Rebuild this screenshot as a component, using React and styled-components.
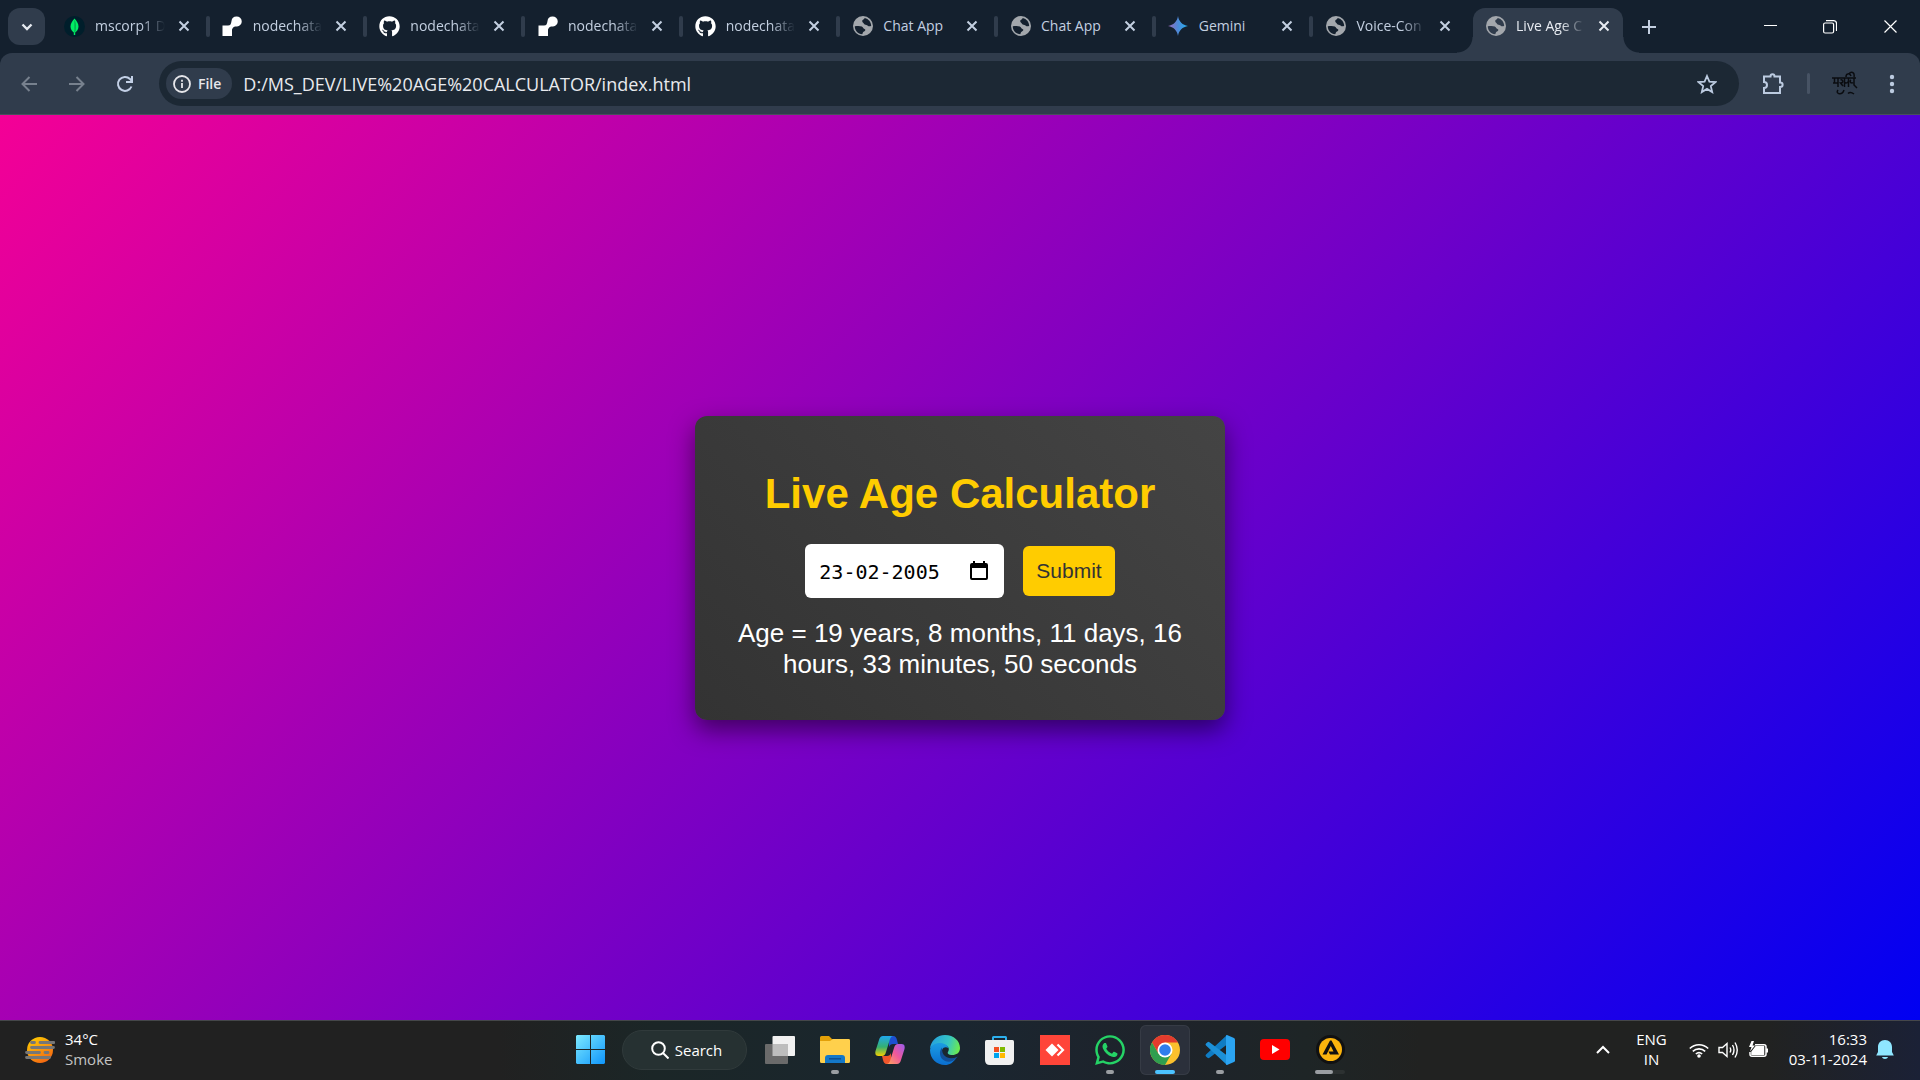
import React, { useState } from "react";
import styled, { createGlobalStyle, css } from "styled-components";
import { FaGithub, FaWhatsapp } from "react-icons/fa";

const UI = `"Open Sans", "Noto Sans", sans-serif`;

const Global = createGlobalStyle`
  * { box-sizing: border-box; }
  html, body, #root { height: 100%; margin: 0; }
  body { overflow: hidden; background: #14202e; }
  button { border: 0; padding: 0; background: none; color: inherit; font: inherit; cursor: pointer; }
  svg { display: block; flex: none; }
`;

const Screen = styled.div`
  display: flex;
  flex-direction: column;
  height: 100vh;
  font-family: ${UI};
`;

/* ---------- browser chrome ---------- */

const TabStrip = styled.header`
  display: flex;
  height: 53px;
  background: #14202e;
  color: #c3cfe0;
`;

const TabSearch = styled.button`
  display: grid;
  place-items: center;
  width: 37px;
  height: 37px;
  margin: 8px 0 0 8px;
  border-radius: 12px;
  background: #303c4c;
  color: #e6eaf0;
`;

const Tabs = styled.nav`
  display: flex;
  flex: 0 1 1578px;
  min-width: 0;
`;

const TabShell = styled.div`
  position: relative;
  display: flex;
  align-items: center;
  flex: 1 1 0;
  min-width: 0;
  margin-top: 8px;
  padding: 0 10px 9px 19px;
  gap: 10px;
  font-size: 14px;
  line-height: 20px;
  ${(p) =>
    p.$line &&
    css`
      &::after {
        content: "";
        position: absolute;
        right: -7px;
        top: 8px;
        width: 4px;
        height: 21px;
        border-radius: 2px;
        background: #303c4c;
      }
    `}
  ${(p) =>
    p.$active &&
    css`
      flex: 0 0 150px;
      margin-left: 9px;
      padding-left: 12px;
      border-radius: 12px 12px 0 0;
      background: #303c4c;
      color: #e8ecf2;
      &::before,
      &::after {
        content: "";
        position: absolute;
        bottom: 0;
        width: 16px;
        height: 16px;
      }
      &::before {
        right: 100%;
        background: radial-gradient(circle at 0 0, transparent 15px, #303c4c 16px);
      }
      &::after {
        left: 100%;
        background: radial-gradient(circle at 100% 0, transparent 15px, #303c4c 16px);
      }
    `}
`;

const Favicon = styled.span`
  display: grid;
  place-items: center;
  flex: 0 0 21px;
  height: 21px;
`;

const TabTitle = styled.span`
  flex: 1;
  min-width: 0;
  white-space: nowrap;
  mask-image: ${(p) => (p.$fade ? "linear-gradient(90deg, #000 calc(100% - 24px), transparent)" : "none")};
`;

const TabClose = styled.button`
  display: grid;
  place-items: center;
  flex: 0 0 18px;
  height: 20px;
`;

const NewTab = styled.button`
  display: grid;
  place-items: center;
  width: 52px;
  height: 53px;
`;

const WindowButtons = styled.div`
  display: flex;
  margin-left: auto;
  color: #fff;
`;

const WindowButton = styled.button`
  display: grid;
  place-items: center;
  width: 60px;
  height: 53px;
`;

const Toolbar = styled.div`
  display: flex;
  align-items: center;
  height: 62px;
  padding: 0 16px 0 11px;
  border-bottom: 1px solid #47505c;
  border-radius: 12px 12px 0 0;
  background: #303c4c;
  color: #bccbe0;
`;

const NavButton = styled.button`
  display: grid;
  place-items: center;
  width: 36px;
  height: 36px;
  margin-right: 12px;
  color: ${(p) => (p.disabled ? "#77818e" : "#c3d0e6")};
`;

const AddressBar = styled.div`
  display: flex;
  align-items: center;
  flex: 1;
  height: 45px;
  margin-left: 4px;
  padding: 0 22px 0 7px;
  gap: 11px;
  border-radius: 24px;
  background: #1c2834;
`;

const SchemeChip = styled.button`
  display: flex;
  align-items: center;
  height: 31px;
  padding: 0 11px 0 7px;
  gap: 7px;
  border-radius: 16px;
  background: #303c4c;
  color: #e6e6ea;
  font-size: 14px;
  font-weight: 600;
`;

const AddressInput = styled.input`
  flex: 1;
  min-width: 0;
  padding: 0;
  border: 0;
  outline: 0;
  background: none;
  color: #e8eaee;
  font: 18px/24px ${UI};
`;

const ToolbarTools = styled.div`
  display: flex;
  align-items: center;
  padding-left: 22px;
`;

const ToolDivider = styled.span`
  width: 3px;
  height: 21px;
  margin: 0 20px 0 22px;
  border-radius: 2px;
  background: #475364;
`;

const ProfileButton = styled.button`
  display: grid;
  place-items: center;
  width: 30px;
  height: 30px;
  margin-right: 20px;
  color: #0a0c10;
`;

/* ---------- page ---------- */

const Page = styled.main`
  display: flex;
  flex: 1;
  align-items: center;
  justify-content: center;
  min-height: 0;
  background: linear-gradient(135deg, #f40096, #0000f2);
  font-family: "Liberation Sans", Arial, sans-serif;
`;

const Card = styled.section`
  width: 530px;
  padding: 52px 36px 40px;
  border-radius: 12px;
  background: linear-gradient(45deg, #333, #444);
  box-shadow: 0 10px 25px rgba(0, 0, 0, 0.5);
  text-align: center;
`;

const Title = styled.h1`
  margin: 0 0 24px;
  color: #fc0;
  font-size: 42px;
  line-height: 52px;
`;

const Form = styled.form`
  display: flex;
  align-items: center;
  justify-content: center;
  gap: 19px;
`;

const DateField = styled.label`
  display: flex;
  align-items: center;
  width: 199px;
  height: 54px;
  padding: 0 16px 0 14px;
  border-radius: 6px;
  background: #fff;
`;

const DateInput = styled.input`
  flex: 1;
  min-width: 0;
  padding: 2px 0 0;
  border: 0;
  outline: 0;
  background: none;
  color: #000;
  font: 20px/28px "DejaVu Sans Mono", monospace;
`;

const PickerButton = styled.button`
  display: grid;
  place-items: center;
`;

const Submit = styled.button`
  height: 50px;
  padding: 0 13px;
  border-radius: 6px;
  background: #fc0;
  color: #333;
  font-size: 21px;
`;

const Result = styled.p`
  margin: 20px 0 0;
  color: #fff;
  font-size: 26px;
  line-height: 31px;
`;

/* ---------- taskbar ---------- */

const Taskbar = styled.footer`
  display: grid;
  grid-template-columns: 1fr auto 1fr;
  height: 60px;
  padding-bottom: 2px;
  border-top: 1px solid #45474a;
  background: linear-gradient(90deg, #212121 0 26%, #1b2627 34%, #1a2630 50%, #1e232b 60%, #1e2526 68%, #212221 74%, #212221 92%, #1b2136);
  color: #fff;
  font-size: 15px;
  line-height: 20px;
`;

const Weather = styled.button`
  display: flex;
  align-items: center;
  justify-self: start;
  margin-left: 25px;
  gap: 10px;
  text-align: left;
`;

const Stack = styled.span`
  display: flex;
  flex-direction: column;
  padding-bottom: 2px;
  text-align: ${(p) => p.$align || "left"};
`;

const Muted = styled.span`
  color: #c4c4c4;
`;

const Apps = styled.nav`
  display: flex;
  align-items: center;
  padding-left: 5px;
`;

const AppButton = styled.button`
  position: relative;
  display: grid;
  place-items: center;
  width: 50px;
  height: 50px;
  margin-right: 5px;
  border-radius: 6px;
  ${(p) =>
    p.$active &&
    css`
      background: #2b303b;
      box-shadow: inset 0 0 0 1px #363b45;
    `}
`;

const Mark = styled.span`
  position: absolute;
  bottom: 1px;
  left: ${(p) => (p.$grouped ? "10px" : "50%")};
  width: ${(p) => p.$w}px;
  height: 4px;
  margin-left: ${(p) => (p.$grouped ? 0 : -p.$w / 2)}px;
  border-radius: 2px;
  background: ${(p) => p.$c};
`;

const SearchPill = styled.button`
  display: flex;
  align-items: center;
  justify-content: center;
  width: 125px;
  height: 40px;
  margin: 0 8px 0 2px;
  padding-left: 4px;
  gap: 6px;
  border: 1px solid #303a3b;
  border-radius: 20px;
  background: #263132;
  font-size: 15px;
`;

const Tray = styled.div`
  display: flex;
  align-items: center;
  justify-self: end;
  padding-right: 26px;
`;

const TrayButton = styled.button`
  display: flex;
  align-items: center;
  gap: 9px;
  margin-left: ${(p) => p.$gap}px;
`;

/* ---------- drawings ---------- */

const Stroke = ({ w = 20, h, d, sw = 2, box, children }) => (
  <svg width={w} height={h || w} viewBox={box || `0 0 ${w} ${h || w}`} fill="none" stroke="currentColor" strokeWidth={sw}>
    {d && <path d={d} />}
    {children}
  </svg>
);

const Cross = () => <Stroke w={12} d="M1.500 1.500l9 9M10.500 1.500l-9 9" />;

const Globe = () => (
  <svg width="20" height="20" viewBox="0 0 20 20">
    <path
      fill="#a3a7ac"
      fillRule="evenodd"
      d="M10 0a10 10 0 1 1 0 20a10 10 0 0 1 0-20zM9.300 5.600c-.6-1.800 1.700-1.900 2.500-3.700C15.500 2.800 18.200 6 18.200 9.700c-1.300 1-2.700.6-3.700-.3-1.500-1.200-2.700-.3-3.400-1.500-.5-1-1.500-1.300-1.800-2.300zM1.800 10.200c2.500-.3 5.200-.5 7 .3 1.700.8 1.200 2.200 2.700 2.400 1.500.4.800 2.200-.5 2.600-1.500.6-1 1.600-1.800 2.700-4.300-.3-7.500-3.800-7.400-8z"
    />
  </svg>
);

const Render = () => (
  <svg width="20" height="20" viewBox="0 0 20 20" fill="#fff">
    <path d="M14.500.500A5 5 0 0 1 15 10.500c-3 0-4 .5-5 3V20H.500V9.500H6c2.500 0 3-1.500 3.500-4.500A5 5 0 0 1 14.500.500z" />
  </svg>
);

const Mongo = () => (
  <svg width="21" height="21" viewBox="0 0 21 21">
    <circle cx="10.500" cy="10.500" r="10.500" fill="#001e2b" />
    <path d="M10.500 2.500C12.500 5 14.500 7 14.500 10.500c0 3-1.800 5-3.300 6V19h-1.400v-2.500c-1.500-1-3.300-3-3.300-6C6.500 7 8.500 5 10.500 2.500z" fill="#00ed64" />
    <path d="M10.500 4v13c1-1 1.200-3 1.200-6.500S11.500 6 10.500 4z" fill="#00994a" />
  </svg>
);

const Gemini = () => (
  <svg width="20" height="20" viewBox="0 0 20 20">
    <defs>
      <linearGradient id="gem" x1="0" x2="1">
        <stop offset="0" stopColor="#9a68b8" />
        <stop offset=".5" stopColor="#4c8ad8" />
        <stop offset="1" stopColor="#22b0f0" />
      </linearGradient>
    </defs>
    <path d="M10 0c.8 5.500 4.500 9.200 10 10-5.500.8-9.200 4.500-10 10-.8-5.500-4.500-9.200-10-10 5.500-.8 9.200-4.500 10-10z" fill="url(#gem)" />
  </svg>
);

const Signature = () => (
  <svg width="26" height="26" viewBox="0 0 26 26" fill="none" stroke="currentColor" strokeWidth="1.500">
    <path d="M0 7h24M2.500 7v5M1 12h5M6 7v9M8.500 9c3-1 3 3 0 3l2.500 3M12.500 7v9M12.500 11.500c2 1 4 0 4-2M16.500 7v9M19 9c-2 1 0 4 2 2.500M22 7v7l3 3M14 6c0-4 4-4 5-1M17 3c2-3 6-2 5 3M6 19c-3 4 4 6 6 0M16 22.500c2-2 4-1 6 .5" />
  </svg>
);

const Smoke = () => (
  <svg width="30" height="26" viewBox="0 0 30 26">
    <defs>
      <linearGradient id="sun" x1="0" x2=".6" y1="0" y2="1">
        <stop offset="0" stopColor="#ffd400" />
        <stop offset="1" stopColor="#f56a12" />
      </linearGradient>
    </defs>
    <circle cx="15" cy="13" r="13" fill="url(#sun)" />
    <path d="M6.500 5.500h3M15 5.500h14M6.500 10.500h22M1.500 15.500h13M20 15.500h3M1.500 20.500h23" stroke="#777" strokeWidth="2.800" strokeLinecap="round" />
  </svg>
);

const Windows = () => (
  <svg width="29" height="29" viewBox="0 0 29 29">
    <defs>
      <linearGradient id="win" gradientUnits="userSpaceOnUse" x1="0" x2="29" y1="0" y2="29">
        <stop offset="0" stopColor="#7deaff" />
        <stop offset="1" stopColor="#0f95fb" />
      </linearGradient>
    </defs>
    <path d="M1 0h13v14H0V1zM15 0h13l1 1v13H15zM0 15h14v14H1l-1-1zM15 15h14v13l-1 1H15z" fill="url(#win)" />
  </svg>
);

const TaskView = () => (
  <svg width="30" height="28" viewBox="0 0 30 28">
    <rect x="7.500" width="22.500" height="20" rx="1" fill="#f1f1f1" />
    <rect y="8" width="23" height="20" rx="1" fill="#6a6a6a" />
    <path d="M7.500 8H23v12H7.500z" fill="#bdbdbd" />
  </svg>
);

const Folder = () => (
  <svg width="30" height="27" viewBox="0 0 30 27">
    <path d="M0 1.500Q0 0 1.500 0H9l3 3h16.500Q30 3 30 5v8H0z" fill="#e3a008" />
    <path d="M0 5h10l3-2h15.500Q30 3 30 4.500v21Q30 27 28.500 27h-27Q0 27 0 25.500z" fill="#ffd04c" />
    <path d="M5 27v-5q0-3 3-3h14q3 0 3 3v5z" fill="#1478c8" />
    <path d="M9 22.800h12" stroke="#0c4f94" strokeWidth="1.500" />
  </svg>
);

const Copilot = () => (
  <svg width="30" height="28" viewBox="0 0 30 28">
    <defs>
      <linearGradient id="cpa" x1="0" x2="0" y1="0" y2="1">
        <stop offset="0" stopColor="#20a8ee" />
        <stop offset=".55" stopColor="#35b070" />
        <stop offset="1" stopColor="#f6d000" />
      </linearGradient>
      <linearGradient id="cpb" x1="1" x2="0" y1="0" y2="1">
        <stop offset="0" stopColor="#9a5cf0" />
        <stop offset=".5" stopColor="#f0589a" />
        <stop offset="1" stopColor="#ffa75c" />
      </linearGradient>
    </defs>
    <path d="M14 0h4.500q2.500 0 3.500 4l1 4h-5q-3 0-4 3z" fill="#1c50d0" />
    <path d="M16 28h-4.500Q9 28 8 24l-1-4h5q3 0 4-3z" fill="#f0562c" />
    <path d="M8 0h10q-2 0-3 3l-4 13q-1 4-4 4H3.500q-4 0-3-5L4 4q1-4 4-4z" fill="url(#cpa)" />
    <path d="M22 28H12q2 0 3-3l4-13q1-4 4-4h3.500q4 0 3 5L26 24q-1 4-4 4z" fill="url(#cpb)" />
  </svg>
);

const Edge = () => (
  <svg width="30" height="30" viewBox="0 0 30 30">
    <defs>
      <linearGradient id="ea" x1="0" x2="1" y1=".3" y2=".5">
        <stop offset="0" stopColor="#249fdf" />
        <stop offset=".6" stopColor="#35c5c4" />
        <stop offset="1" stopColor="#6bea50" />
      </linearGradient>
      <linearGradient id="eb" x1="0" x2="0" y1="0" y2="1">
        <stop offset="0" stopColor="#1b9de2" />
        <stop offset="1" stopColor="#0a6ed0" />
      </linearGradient>
    </defs>
    <path d="M0 14C.500 6 7 0 15 0c9 0 15 6 15 13 0 5-4 7-7.500 7-4 0-5.500-1.500-4.500-3 2.500-4-1-7-4-7C7 8 2 10 0 14z" fill="url(#ea)" />
    <path d="M0 15C1 10 6 7.500 11 8c4 .3 7 3 7.500 5-5-2.500-8 2-6 6.500 2 4 8 6 14 3C23.500 27.500 19.500 30 15 30 6.500 30 0 23.500 0 15z" fill="url(#eb)" />
    <path d="M12 12.500c-3.500 4-2.500 11 3 13.500 4.500 2 9 0 13-4.500-5 3-12 2-14.500-2-1.500-2.500-1.500-5-1.500-7z" fill="#124f99" />
  </svg>
);

const Store = () => (
  <svg width="30" height="30" viewBox="0 0 30 30">
    <path d="M8 7V2.500Q8 2 8.500 2h12q.5 0 .5.500V7" fill="none" stroke="#2cb0ee" strokeWidth="2" />
    <path d="M0 6.500Q0 5 1.500 5h26Q29 5 29 6.500V25q0 5-5 5H5q-5 0-5-5z" fill="#f1f1f1" />
    <path d="M9 12h5v5H9z" fill="#f25022" />
    <path d="M15 12h5v5h-5z" fill="#7fba00" />
    <path d="M9 18h5v5H9z" fill="#00a4ef" />
    <path d="M15 18h5v5h-5z" fill="#ffb900" />
  </svg>
);

const AnyDesk = () => (
  <svg width="30" height="30" viewBox="0 0 30 30">
    <path d="M0 0h30v30H0z" fill="#ff4539" />
    <path d="M12 8.500l6.500 6.500-6.500 6.500L5.500 15z" fill="#fff" />
    <path d="M16 9.500l5.500 5.500-5.500 5.500" fill="none" stroke="#ff4539" strokeWidth="1" />
    <path d="M17.500 9.500l5.500 5.500-5.500 5.500" fill="none" stroke="#fff" strokeWidth="2.200" />
  </svg>
);

const Chrome = () => (
  <svg width="30" height="30" viewBox="0 0 30 30">
    <circle cx="15" cy="15" r="15" fill="#fbc02d" />
    <path d="M15 7.500h13A15 15 0 0 0 2 7.500l6.500 11.300z" fill="#e33b2e" />
    <path d="M2 7.500A15 15 0 0 0 15 30l6.500-11.200-13 0z" fill="#2f9e4f" />
    <circle cx="15" cy="15" r="7.500" fill="#fff" />
    <circle cx="15" cy="15" r="5.800" fill="#2f7ded" />
  </svg>
);

const Code = () => (
  <svg width="30" height="30" viewBox="0 0 30 30">
    <path d="M22 0L1 19.500q-1 1 0 2l1.500 1.300q.8.700 2 0L24 8z" fill="#0f7cc4" />
    <path d="M22 30L1 10.500q-1-1 0-2l1.500-1.300q.8-.7 2 0L24 22z" fill="#1c90d8" />
    <path d="M22 0l7 3q1 .5 1 1.500v21q0 1-1 1.500l-7 3q-1 0-1-1V1q0-1 1-1z" fill="#2ba4f2" />
  </svg>
);

const YouTube = () => (
  <svg width="30" height="21" viewBox="0 0 30 21">
    <rect width="30" height="21" rx="4" fill="#f00" />
    <path d="M12 6l7.500 4.500L12 15z" fill="#fff" />
  </svg>
);

const AimpLogo = () => (
  <svg width="29" height="29" viewBox="0 0 29 29">
    <circle cx="14.500" cy="14.500" r="14.500" fill="#111" />
    <circle cx="14.500" cy="14.500" r="11.500" fill="#fbb40d" />
    <path d="M14 5.500h1.500l7.500 14H14l-1.500-3h5L14.800 11 10.500 19.500H6.500z" fill="#111" />
  </svg>
);

const Wifi = () => (
  <Stroke w={20} h={16} sw={1.6} d="M.800 6.500a13 13 0 0 1 18.400 0M3.800 9.400a9 9 0 0 1 12.400 0M6.800 12a5 5 0 0 1 6.400 0">
    <circle cx="10" cy="14" r="1" fill="currentColor" />
  </Stroke>
);

const Sound = () => (
  <Stroke w={21} h={18} sw={1.4} d="M1 6.500h3.500L9 2.500v13l-4.500-4H1zM12 6.500q1.500 2.500 0 5M14.500 4q3 5 0 10M17 1.500q4.500 7.500 0 15" />
);

const Battery = () => (
  <svg width="21" height="18" viewBox="0 0 21 18" fill="none" stroke="#fff" strokeWidth="1.500">
    <path d="M7 3.700h9q2 0 2 2v7.600q0 2-2 2H4q-2 0-2-2V11" />
    <path d="M8 5.800h7.500v7.400H4V11z" fill="#fff" />
    <path d="M19 7.500v4" strokeWidth="2" />
    <path d="M3.500 0L1 6h2.500L2 10.500 7 4.500H4.500L6 0z" fill="#fff" stroke="none" />
  </svg>
);

const Bell = () => (
  <svg width="18" height="20" viewBox="0 0 18 20" fill="#8fe6ff">
    <path d="M9 0c4.200 0 7 3 7 7v5l1.800 3.500H.200L2 12V7c0-4 2.800-7 7-7zM6 17h6c-.5 2.500-5.500 2.500-6 0z" />
  </svg>
);

/* ---------- data ---------- */

const tabs = [
  ["mscorp1 D", <Mongo />, true],
  ["nodechata", <Render />, true],
  ["nodechata", <FaGithub size={21} color="#fff" />, true],
  ["nodechata", <Render />, true],
  ["nodechata", <FaGithub size={21} color="#fff" />, true],
  ["Chat App", <Globe />],
  ["Chat App", <Globe />],
  ["Gemini", <Gemini />],
  ["Voice-Con", <Globe />, true],
  ["Live Age C", <Globe />, true],
];

const grey = "#9a9ea2";
const apps = [
  ["Task view", <TaskView />],
  ["File Explorer", <Folder />, 8, grey],
  ["Copilot", <Copilot />],
  ["Edge", <Edge />],
  ["Store", <Store />],
  ["AnyDesk", <AnyDesk />],
  ["WhatsApp", <FaWhatsapp size={34} color="#25d366" />, 8, grey],
  ["Chrome", <Chrome />, 20, "#4cc2ff"],
  ["Visual Studio Code", <Code />, 8, grey],
  ["YouTube", <YouTube />],
  ["AIMP", <AimpLogo />, 18, grey],
];

export default function App() {
  const [url, setUrl] = useState("D:/MS_DEV/LIVE%20AGE%20CALCULATOR/index.html");
  const [date, setDate] = useState("23-02-2005");

  return (
    <Screen>
      <Global />
      <TabStrip>
        <TabSearch aria-label="Search tabs">
          <Stroke w={12} h={8} d="M1.500 1.500L6 6l4.500-4.500" sw={2.4} />
        </TabSearch>
        <Tabs>
          {tabs.map(([name, icon, fade], i) => (
            <TabShell key={i} $line={i < 8} $active={i === 9}>
              <Favicon>{icon}</Favicon>
              <TabTitle $fade={fade}>{name}</TabTitle>
              <TabClose aria-label="Close tab">
                <Cross />
              </TabClose>
            </TabShell>
          ))}
        </Tabs>
        <NewTab aria-label="New tab">
          <Stroke w={14} d="M7 0v14M0 7h14" />
        </NewTab>
        <WindowButtons>
          <WindowButton aria-label="Minimize">
            <Stroke w={13} sw={1} d="M0 5.500h13" />
          </WindowButton>
          <WindowButton aria-label="Restore">
            <Stroke w={14} sw={1.2}>
              <rect x=".6" y="3" width="10" height="10" rx="1.500" />
              <path d="M3 .6h7.500q3 0 3 3V11" />
            </Stroke>
          </WindowButton>
          <WindowButton aria-label="Close window">
            <Stroke w={13} sw={1.2} d="M.500.500l12 12M12.500.500l-12 12" />
          </WindowButton>
        </WindowButtons>
      </TabStrip>

      <Toolbar>
        <NavButton aria-label="Back" disabled>
          <Stroke w={16} d="M16 8H1.500M8.500 1L1.500 8l7 7" />
        </NavButton>
        <NavButton aria-label="Forward" disabled>
          <Stroke w={16} d="M0 8h14.500M7.500 1l7 7-7 7" />
        </NavButton>
        <NavButton aria-label="Reload">
          <Stroke w={18} d="M15.500 11.500A7 7 0 1 1 14 4l2 2.500M16 1v6h-6" />
        </NavButton>
        <AddressBar>
          <SchemeChip>
            <Stroke w={18} sw={1.8}>
              <circle cx="9" cy="9" r="8" />
              <path d="M9 8v5M9 4.800v2" />
            </Stroke>
            File
          </SchemeChip>
          <AddressInput aria-label="Address" value={url} onChange={(e) => setUrl(e.target.value)} />
          <button aria-label="Bookmark this page">
            <Stroke w={20} sw={1.8} d="M10 2l2.400 5.600 6 .5-4.600 4 1.400 6L10 14.900l-5.200 3.200 1.400-6-4.600-4 6-.5z" />
          </button>
        </AddressBar>
        <ToolbarTools>
          <button aria-label="Extensions">
            <Stroke w={24} sw={2} d="M4 4.500h5.500c0-3 4-3 4 0H19v6c3.500 0 3.500 4.500 0 4.500v6H3v-5c4 0 4-6 0-6V4.500z" />
          </button>
          <ToolDivider />
          <ProfileButton aria-label="Profile">
            <Signature />
          </ProfileButton>
          <button aria-label="Menu">
            <svg width="24" height="20" viewBox="0 0 24 20" fill="currentColor">
              <circle cx="12" cy="3" r="2.200" />
              <circle cx="12" cy="10" r="2.200" />
              <circle cx="12" cy="17" r="2.200" />
            </svg>
          </button>
        </ToolbarTools>
      </Toolbar>

      <Page>
        <Card>
          <Title>Live Age Calculator</Title>
          <Form onSubmit={(e) => e.preventDefault()}>
            <DateField>
              <DateInput aria-label="Date of birth" value={date} onChange={(e) => setDate(e.target.value)} />
              <PickerButton type="button" aria-label="Open calendar">
                <svg width="18" height="20" viewBox="0 0 18 20">
                  <path d="M3 0h2v2h8V0h2v2h1q2 0 2 2v13q0 2-2 2H2q-2 0-2-2V4q0-2 2-2h1zM2 7v10h14V7z" fillRule="evenodd" />
                </svg>
              </PickerButton>
            </DateField>
            <Submit type="submit">Submit</Submit>
          </Form>
          <Result>Age = 19 years, 8 months, 11 days, 16 hours, 33 minutes, 50 seconds</Result>
        </Card>
      </Page>

      <Taskbar>
        <Weather>
          <Smoke />
          <Stack>
            <span>34°C</span>
            <Muted>Smoke</Muted>
          </Stack>
        </Weather>
        <Apps>
          <AppButton aria-label="Start">
            <Windows />
          </AppButton>
          <SearchPill>
            <Stroke w={18} sw={2}>
              <circle cx="7.500" cy="7.500" r="6.300" />
              <path d="M12 12l5.500 5.500" />
            </Stroke>
            Search
          </SearchPill>
          {apps.map(([name, icon, w, c]) => (
            <AppButton key={name} aria-label={name} $active={name === "Chrome"}>
              {icon}
              {name === "AIMP" && <Mark $w={30} $c="#2c3131" $grouped />}
              {w && <Mark $w={w} $c={c} $grouped={name === "AIMP"} />}
            </AppButton>
          ))}
        </Apps>
        <Tray>
          <TrayButton aria-label="Hidden icons" $gap={0}>
            <Stroke w={14} h={9} d="M1 8l6-6 6 6" />
          </TrayButton>
          <TrayButton $gap={26}>
            <Stack $align="center">
              <span>ENG</span>
              <span>IN</span>
            </Stack>
          </TrayButton>
          <TrayButton aria-label="Network, sound, battery" $gap={22}>
            <Wifi />
            <Sound />
            <Battery />
          </TrayButton>
          <TrayButton $gap={20}>
            <Stack $align="right">
              <span>16:33</span>
              <span>03-11-2024</span>
            </Stack>
            <Bell />
          </TrayButton>
        </Tray>
      </Taskbar>
    </Screen>
  );
}
